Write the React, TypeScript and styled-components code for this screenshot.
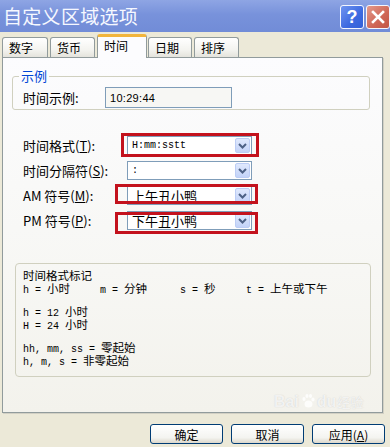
import styled, { createGlobalStyle } from "styled-components"

const GlobalStyle = createGlobalStyle`
  html, body {
    margin: 0;
    padding: 0;
  }
  body {
    width: 390px;
    height: 447px;
    overflow: hidden;
    background: #ece9d8;
    font-family: "Noto Sans CJK SC", "Liberation Sans", sans-serif;
    color: #000;
  }
`

const Window = styled.div`
  position: relative;
  width: 390px;
  height: 447px;
  display: flex;
  flex-direction: column;
  background: #ece9d8;
`

const TitleBar = styled.div`
  height: 32px;
  flex: none;
  display: flex;
  justify-content: space-between;
  padding-left: 3px;
  background: linear-gradient(#8ea5e4, #7892db 45%, #718cd7);
`

const Title = styled.div`
  color: #f6f8ff;
  font-size: 19px;
  line-height: 31px;
  letter-spacing: 0.3px;
`

const CaptionButtons = styled.div`
  display: flex;
  gap: 2px;
  margin-top: 5px;
`

const CaptionBtn = styled.div<{ $close?: boolean }>`
  width: 24px;
  height: 24px;
  box-sizing: border-box;
  border: 1px solid #f4f6ff;
  border-radius: 3px;
  display: flex;
  align-items: center;
  justify-content: center;
  color: #fff;
  font: bold 18px "Liberation Sans", sans-serif;
  background: ${p => p.$close
    ? "linear-gradient(135deg, #e49a8c, #cf6656 60%, #c25545)"
    : "linear-gradient(135deg, #6f94f0, #3d69e0 60%, #3360d8)"};
`

const Content = styled.div`
  flex: 1;
  display: flex;
  flex-direction: column;
  padding: 0 7px 0 2px;
`

const TabStrip = styled.div`
  display: flex;
  align-items: flex-end;
  height: 23px;
  margin-top: 2px;
  position: relative;
  z-index: 2;
`

const Tab = styled.div<{ $active?: boolean; $w: number; $gap: number }>`
  width: ${p => p.$w}px;
  margin-right: ${p => p.$gap}px;
  box-sizing: border-box;
  height: ${p => p.$active ? 24 : 20}px;
  margin-bottom: ${p => p.$active ? -1 : 0}px;
  border: 1px solid #919b9c;
  border-bottom: none;
  border-top: ${p => p.$active ? "3px solid #f2b53c" : "1px solid #919b9c"};
  border-radius: 3px 3px 0 0;
  padding-left: 6px;
  font-size: 12px;
  line-height: ${p => p.$active ? 17 : 19}px;
  background: ${p => p.$active
    ? "#fcfcfe"
    : "linear-gradient(#ffffff, #f4f4f0 60%, #e4e3dc)"};
`

const Panel = styled.div`
  height: 356px;
  box-sizing: border-box;
  border: 1px solid #919b9c;
  box-shadow: 1px 1px 0 #d2d0c4;
  background: linear-gradient(#fcfcfe, #f7f7f4 60%, #f3f2ec);
  display: flex;
  flex-direction: column;
`

const GroupBox = styled.fieldset`
  margin: 11px 12px 0 9px;
  padding: 4px 10px 1px 10px;
  border: 1px solid #d0d0bf;
  border-radius: 3px;
  min-width: 0;
`

const Legend = styled.legend`
  margin-left: -4px;
  padding: 0 2px;
  font-size: 13px;
  line-height: 14px;
  color: #0046d5;
`

const SampleRow = styled.div`
  display: flex;
  align-items: center;
`

const SampleLabel = styled.div`
  width: 82px;
  font-size: 13px;
`

const SampleInput = styled.div`
  width: 127px;
  height: 21px;
  box-sizing: border-box;
  border: 1px solid #7f9db9;
  background: #f7f7f4;
  padding-left: 4px;
  display: flex;
  align-items: center;
  font: 11px "Liberation Sans", sans-serif;
  letter-spacing: 0.3px;
`

const FormRows = styled.div`
  margin-top: 23px;
  display: flex;
  flex-direction: column;
`

const FieldRow = styled.div`
  height: 25px;
  display: flex;
  align-items: center;
  padding-left: 20px;
`

const FieldLabel = styled.div`
  width: 104px;
  flex: none;
  font-size: 13px;
  white-space: nowrap;
`

const SelectWrap = styled.div<{ $mark?: string }>`
  position: relative;
  width: 125px;
  height: 19px;
  &::after {
    content: "";
    display: ${p => p.$mark ? "block" : "none"};
    position: absolute;
    inset: ${p => p.$mark || "0"};
    border: 3px solid #c3121d;
    pointer-events: none;
  }
`

const SelectBox = styled.div`
  height: 100%;
  box-sizing: border-box;
  border: 1px solid #7f9db9;
  background: #fff;
  display: flex;
  align-items: center;
  justify-content: space-between;
  padding: 0 1px 0 4px;
`

const SelectText = styled.span<{ $mono?: boolean }>`
  font-size: ${p => p.$mono ? 10 : 13}px;
  font-family: ${p => p.$mono
    ? "\"Liberation Mono\", monospace"
    : "\"Noto Sans CJK SC\", sans-serif"};
`

const DropBtn = styled.div`
  width: 15px;
  height: 15px;
  box-sizing: border-box;
  border: 1px solid #bccdf5;
  border-radius: 2px;
  background: linear-gradient(#e0e9fd, #c3d3f8);
  display: flex;
  align-items: center;
  justify-content: center;
`

const NotesBox = styled.div`
  margin: 30px 11px 0 12px;
  height: 114px;
  box-sizing: border-box;
  border: 1px solid #d0d0bf;
  border-radius: 4px;
  padding: 5px 7px;
`

const NoteTitle = styled.div`
  height: 13px;
  font: 11.5px/13px "Noto Sans CJK SC", sans-serif;
`

const NoteLine = styled.div<{ $gap?: boolean }>`
  height: 13px;
  margin-top: ${p => p.$gap ? 10 : 0}px;
  white-space: pre;
  font: 10px/13px "Liberation Mono", monospace;
`

const NoteGrid = styled.div`
  display: grid;
  grid-template-columns: 77px 80px 66px auto;
  align-items: baseline;
`

const Cjk = styled.span`
  margin-left: 6px;
  font: 11.5px/13px "Noto Sans CJK SC", sans-serif;
`

const ButtonRow = styled.div`
  display: flex;
  justify-content: flex-end;
  gap: 8px;
  margin: 11px -2px 0 0;
`

const PushButton = styled.div`
  width: 73px;
  height: 20px;
  box-sizing: border-box;
  border: 1px solid #003c74;
  border-radius: 3px;
  background: linear-gradient(#ffffff, #f4f4f0 70%, #dcd8cc);
  display: flex;
  align-items: center;
  justify-content: center;
  font-size: 12px;
`

const Watermark = styled.div`
  position: absolute;
  left: 274px;
  top: 392px;
  display: flex;
  align-items: flex-end;
  color: rgba(255, 255, 255, 0.75);
  font: bold 16px "Liberation Sans", sans-serif;
  text-shadow: 0 0 1px rgba(160, 160, 160, 0.5);
  pointer-events: none;
`

const WaterCn = styled.span`
  font: 13px "Noto Sans CJK SC", sans-serif;
  margin-left: 1px;
`

function Chevron () {
  return (
    <svg width="9" height="6" viewBox="0 0 9 6">
      <polyline points="1,1 4.5,4.5 8,1" fill="none" stroke="#4d6185" strokeWidth="2" />
    </svg>
  )
}

function Paw () {
  return (
    <svg width="16" height="16" viewBox="0 0 16 16" style={{ margin: "0 1px 2px" }}>
      <g fill="rgba(255,255,255,0.8)">
        <ellipse cx="4" cy="6" rx="1.6" ry="2" />
        <ellipse cx="7" cy="3" rx="1.6" ry="2" />
        <ellipse cx="10.5" cy="3" rx="1.6" ry="2" />
        <ellipse cx="13" cy="6.5" rx="1.6" ry="2" />
        <ellipse cx="8.5" cy="11" rx="4" ry="3.5" />
      </g>
    </svg>
  )
}

interface IFieldProps {
  label: React.ReactNode
  value: string
  mono?: boolean
  mark?: string
}

function ComboField ({ label, value, mono, mark }: IFieldProps) {
  return (
    <FieldRow>
      <FieldLabel>{label}</FieldLabel>
      <SelectWrap $mark={mark}>
        <SelectBox>
          <SelectText $mono={mono}>{value}</SelectText>
          <DropBtn><Chevron /></DropBtn>
        </SelectBox>
      </SelectWrap>
    </FieldRow>
  )
}

const tabs = [
  { text: "数字", w: 46, gap: 2 },
  { text: "货币", w: 45, gap: 2 },
  { text: "时间", w: 50, gap: 1, active: true },
  { text: "日期", w: 44, gap: 2 },
  { text: "排序", w: 45, gap: 0 },
]

function App () {
  return (
    <Window>
      <GlobalStyle />
      <TitleBar>
        <Title>自定义区域选项</Title>
        <CaptionButtons>
          <CaptionBtn>?</CaptionBtn>
          <CaptionBtn $close>
            <svg width="14" height="14" viewBox="0 0 14 14">
              <path d="M2 2 L12 12 M12 2 L2 12" stroke="#fff" strokeWidth="2.6" strokeLinecap="square" />
            </svg>
          </CaptionBtn>
        </CaptionButtons>
      </TitleBar>

      <Content>
        <TabStrip>
          {tabs.map(t => (
            <Tab key={t.text} $w={t.w} $gap={t.gap} $active={t.active}>{t.text}</Tab>
          ))}
        </TabStrip>

        <Panel>
          <GroupBox>
            <Legend>示例</Legend>
            <SampleRow>
              <SampleLabel>时间示例:</SampleLabel>
              <SampleInput>10:29:44</SampleInput>
            </SampleRow>
          </GroupBox>

          <FormRows>
            <ComboField label={<>时间格式(<u>T</u>):</>} value="H:mm:sstt" mono mark="-3px -7px -2px -6px" />
            <ComboField label={<>时间分隔符(<u>S</u>):</>} value=":" mono />
            <ComboField label={<>AM 符号(<u>M</u>):</>} value="上午丑小鸭" mark="-2px -6px 1px -12px" />
            <ComboField label={<>PM 符号(<u>P</u>):</>} value="下午丑小鸭" mark="1px -6px -4px -12px" />
          </FormRows>

          <NotesBox>
            <NoteTitle>时间格式标记</NoteTitle>
            <NoteLine as={NoteGrid}>
              <span>h =<Cjk>小时</Cjk></span>
              <span>m =<Cjk>分钟</Cjk></span>
              <span>s =<Cjk>秒</Cjk></span>
              <span>t =<Cjk>上午或下午</Cjk></span>
            </NoteLine>
            <NoteLine $gap>h = 12<Cjk>小时</Cjk></NoteLine>
            <NoteLine>H = 24<Cjk>小时</Cjk></NoteLine>
            <NoteLine $gap>hh, mm, ss =<Cjk>零起始</Cjk></NoteLine>
            <NoteLine>h, m, s =<Cjk>非零起始</Cjk></NoteLine>
          </NotesBox>
        </Panel>

        <ButtonRow>
          <PushButton>确定</PushButton>
          <PushButton>取消</PushButton>
          <PushButton>应用(<u>A</u>)</PushButton>
        </ButtonRow>
      </Content>

      <Watermark>
        Bai<Paw />du<WaterCn>经验</WaterCn>
      </Watermark>
    </Window>
  )
}

export default App
